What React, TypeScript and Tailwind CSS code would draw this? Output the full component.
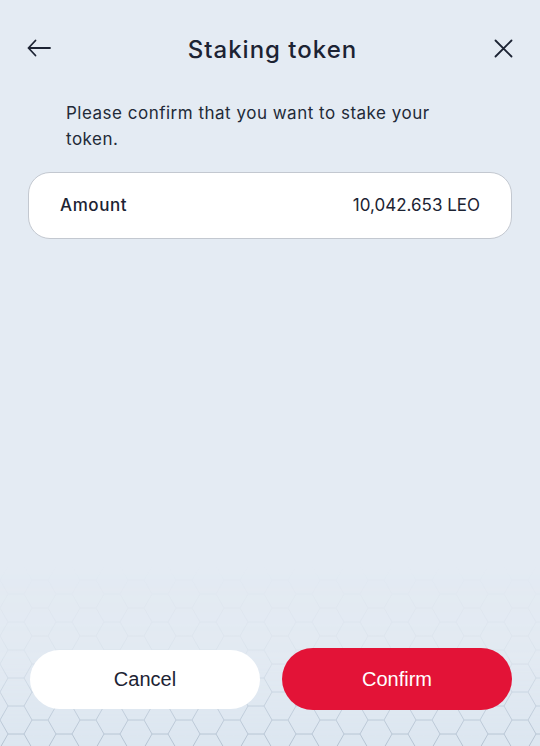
function HexBackdrop() {
  return (
    <svg className="pointer-events-none absolute bottom-0 left-0 h-[180px] w-full" viewBox="0 0 540 180" preserveAspectRatio="none">
      <defs>
        <pattern id="hex" width="48" height="28" patternUnits="userSpaceOnUse">
          <path d="M0 14 L8 0 L24 0 L32 14 L24 28 L8 28 Z M32 14 L48 14" fill="none" stroke="#b4c2d1" strokeWidth="1" />
        </pattern>
        <linearGradient id="fade" x1="0" y1="0" x2="0" y2="1">
          <stop offset="0" stopColor="white" stopOpacity="0" />
          <stop offset="0.5" stopColor="white" stopOpacity="0.15" />
          <stop offset="1" stopColor="white" stopOpacity="1" />
        </linearGradient>
        <mask id="m">
          <rect width="540" height="180" fill="url(#fade)" />
        </mask>
      </defs>
      <rect width="540" height="180" fill="#dce6f0" mask="url(#m)" />
      <rect width="540" height="180" fill="url(#hex)" mask="url(#m)" />
    </svg>
  )
}

export default function App() {
  return (
    <div className="relative flex h-[746px] w-[540px] flex-col overflow-hidden bg-[#e4ebf3] font-['Inter','Noto_Sans',sans-serif] text-[#1c2333]">
      <HexBackdrop />

      <div className="relative mt-[25px] flex h-[50px] items-center justify-between pl-[27px] pr-[27px]">
        <svg width="24" height="18" viewBox="0 0 24 18" className="mb-[4px]" fill="none" stroke="currentColor" strokeWidth="1.8" strokeLinecap="round" strokeLinejoin="round">
          <path d="M8.5 1.5 L1.5 9 L8.5 16.5 M1.5 9 H23" />
        </svg>
        <h1 className="text-[24px] font-medium tracking-[1px]">Staking token</h1>
        <svg width="19" height="19" viewBox="0 0 19 19" className="mb-[4px]" fill="none" stroke="currentColor" strokeWidth="1.8" strokeLinecap="round">
          <path d="M1.5 1.5 L17.5 17.5 M17.5 1.5 L1.5 17.5" />
        </svg>
      </div>

      <p className="relative ml-[66px] mt-[25px] w-[385px] text-[17px] leading-[26px] tracking-[0.5px] text-[#222a38]">
        Please confirm that you want to stake your token.
      </p>

      <div className="relative mx-[28px] mt-[20px] flex h-[67px] items-center justify-between rounded-[22px] border border-[#c3c8d0] bg-white pl-[31px] pr-[31px] text-[17px]">
        <span className="font-medium tracking-[0.6px]">Amount</span>
        <span>10,042.653 LEO</span>
      </div>

      <div className="relative mt-auto mb-[36px] flex items-center gap-[22px] pl-[30px] pr-[28px] font-['Liberation_Sans',Arial,sans-serif] text-[20px]">
        <button className="h-[59px] flex-1 rounded-full bg-white text-[#1c2333]">Cancel</button>
        <button className="h-[62px] flex-1 rounded-full bg-[#e31337] text-white">Confirm</button>
      </div>
    </div>
  )
}
